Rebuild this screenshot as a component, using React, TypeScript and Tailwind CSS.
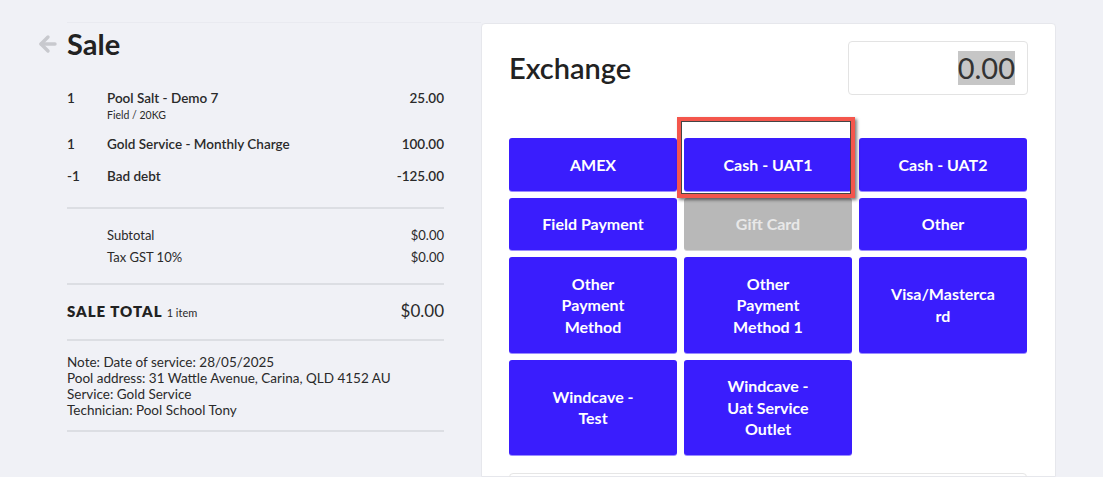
import React from 'react';
import { ArrowLeft } from 'lucide-react';

interface LineItem {
  qty: string;
  name: string;
  detail?: string;
  amount: string;
}

const items: LineItem[] = [
  { qty: '1', name: 'Pool Salt - Demo 7', detail: 'Field / 20KG', amount: '25.00' },
  { qty: '1', name: 'Gold Service - Monthly Charge', amount: '100.00' },
  { qty: '-1', name: 'Bad debt', amount: '-125.00' },
];

const notes = [
  'Note: Date of service: 28/05/2025',
  'Pool address: 31 Wattle Avenue, Carina, QLD 4152 AU',
  'Service: Gold Service',
  'Technician: Pool School Tony',
];

interface Method {
  label: string;
  disabled?: boolean;
  marked?: boolean;
}

const methods: Method[] = [
  { label: 'AMEX' },
  { label: 'Cash - UAT1', marked: true },
  { label: 'Cash - UAT2' },
  { label: 'Field Payment' },
  { label: 'Gift Card', disabled: true },
  { label: 'Other' },
  { label: 'Other Payment Method' },
  { label: 'Other Payment Method 1' },
  { label: 'Visa/Mastercard' },
  { label: 'Windcave - Test' },
  { label: 'Windcave - Uat Service Outlet' },
];

const MethodButton: React.FC<{ method: Method }> = ({ method }) => {
  const button = (
    <button
      className={`flex w-full h-full items-center justify-center rounded-[3px] px-[30px] py-[15.5px] text-center text-[16px] font-bold leading-[21.5px] [overflow-wrap:anywhere] ${
        method.disabled
          ? 'bg-[#b8b8b8] text-[#e8e8e8] shadow-[0_1px_0_#d4d4d4]'
          : 'bg-[#3a1dfd] text-white shadow-[0_1px_0_#9a8cff]'
      }`}
    >
      {method.label}
    </button>
  );

  if (!method.marked) return button;

  return (
    <div className="relative h-full">
      {button}
      {/* red annotation box from the screenshot */}
      <div className="pointer-events-none absolute left-[-7px] right-[-3px] top-[-21px] bottom-[-7px] border-4 border-[#f4564c] shadow-[2px_2px_3px_rgba(0,0,0,0.5)]">
        <div className="h-full w-full border border-[#444]"></div>
      </div>
    </div>
  );
};

export default function App() {
  return (
    <div className="flex h-[477px] overflow-hidden bg-[#f0f1f6] font-['Lato','Liberation_Sans',sans-serif] text-[#2a2a2a]">
      {/* sale summary */}
      <div className="w-[481px] shrink-0 pl-[67px] pt-[22px]">
        <div className="border-t border-[#e9eaf0] pr-[37px]">
          <div className="relative mt-[3px]">
            <ArrowLeft className="absolute left-[-31px] top-[6px] text-[#c8c9ce]" size={24} strokeWidth={3.4} />
            <h1 className="text-[29px] font-bold leading-[35px] text-[#222]">Sale</h1>
          </div>

          <div className="mt-[21px]">
            {items.map((item) => (
              <div key={item.name} className="flex py-[6px] text-[13.5px] font-semibold">
                <div className="w-[40px] leading-5">{item.qty}</div>
                <div className="flex-1">
                  <div className="leading-5">{item.name}</div>
                  {item.detail && <div className="text-[10.5px] font-normal leading-[14px]">{item.detail}</div>}
                </div>
                <div className="leading-5">{item.amount}</div>
              </div>
            ))}
          </div>

          <div className="mt-[15px] border-t-2 border-[#dcdee3] pt-[15px] pb-[15px] text-[13px] leading-[22px]">
            <div className="flex pl-[40px]">
              <span className="flex-1">Subtotal</span>
              <span>$0.00</span>
            </div>
            <div className="flex pl-[40px]">
              <span className="flex-1">Tax GST 10%</span>
              <span>$0.00</span>
            </div>
          </div>

          <div className="flex items-baseline border-t-2 border-[#dcdee3] pt-[14px] pb-[14px] leading-6">
            <span className="text-[15px] font-extrabold tracking-[1px] text-[#222]">SALE TOTAL</span>
            <span className="ml-[4px] flex-1 text-[11px]">1 item</span>
            <span className="text-[17px]">$0.00</span>
          </div>

          <div className="border-t-2 border-b-2 border-[#dcdee3] pt-[13px] pb-[12px] text-[13.5px] leading-4">
            {notes.map((n) => (
              <div key={n}>{n}</div>
            ))}
          </div>
        </div>
      </div>

      {/* payment panel */}
      <div className="mt-[23px] w-[575px] shrink-0 rounded-t-[4px] border border-[#e6e7ec] bg-white px-[27px] pt-[17px]">
        <div className="flex items-center justify-between">
          <h2 className="text-[29px] font-semibold leading-[36px] text-[#222]">Exchange</h2>
          <div className="flex h-[54px] w-[180px] items-center justify-end rounded-[4px] border border-[#e3e3e3] pr-[12px]">
            <span className="bg-[#c6c6c6] text-[29px] leading-[34px] text-[#333]">0.00</span>
          </div>
        </div>

        <div className="mt-[43px] grid w-[518px] grid-cols-[168px_168px_168px] gap-[7px]">
          {methods.map((m) => (
            <MethodButton key={m.label} method={m} />
          ))}
        </div>

        <div className="mt-[18px] h-[20px] w-[518px] rounded-t-[4px] border border-[#e6e6e6]"></div>
      </div>
    </div>
  );
}
